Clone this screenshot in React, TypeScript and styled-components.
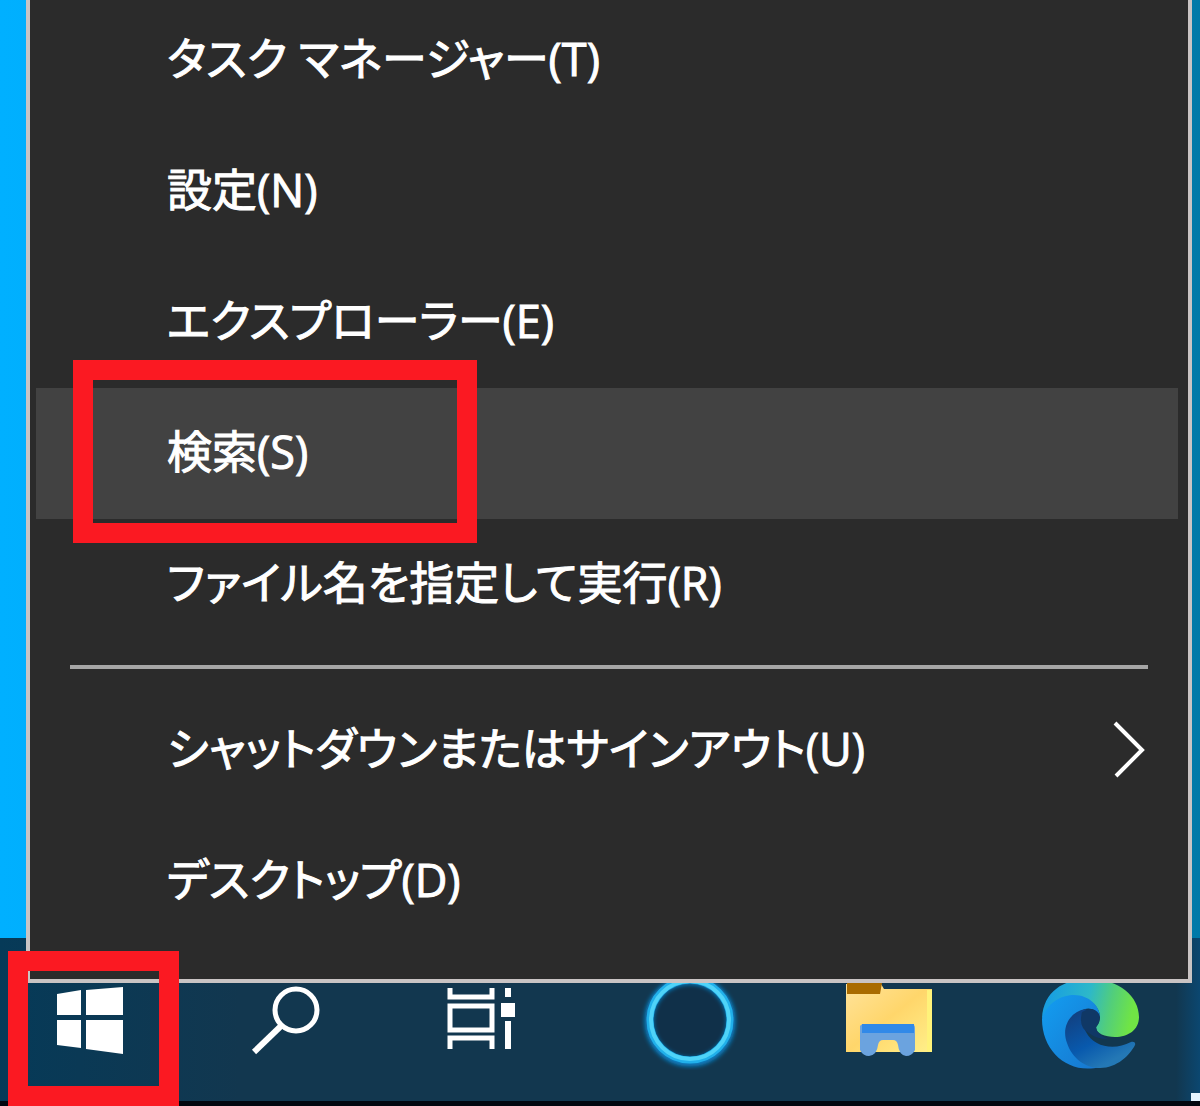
import React from "react";
import styled, { createGlobalStyle, css } from "styled-components";

const GlobalStyle = createGlobalStyle`
  *, *::before, *::after { box-sizing: border-box; }
  body {
    margin: 0;
    background: #0b2d45;
    font-family: "Open Sans", "Noto Sans CJK JP", sans-serif;
  }
`;

const Desktop = styled.main`
  display: flex;
  flex-direction: column;
  justify-content: flex-end;
  height: 100vh;
  overflow: hidden;
  background: linear-gradient(90deg, #00b0ff 0%, #00a2ea 50%, #0079a8 100%);
`;

const Menu = styled.ul`
  position: relative;
  z-index: 1;
  flex: none;
  margin: 0 8px 0 26px;
  padding: 0 10px 32px 6px;
  list-style: none;
  background: #2b2b2b;
  border: 4px solid #c9c4c4;
  border-top-width: 0;
`;

const MenuItem = styled.li`
  position: relative;
`;

const MenuButton = styled.button<{ $active?: boolean }>`
  display: flex;
  align-items: center;
  justify-content: space-between;
  width: 100%;
  height: 131px;
  padding: 0 32px 4px 131px;
  border: 0;
  background: ${(p) => (p.$active ? "#424242" : "transparent")};
  color: #fff;
  font: inherit;
  font-size: 45px;
  line-height: 64px;
  font-feature-settings: "palt";
  -webkit-text-stroke: 1px #fff;
  text-align: left;
  white-space: nowrap;
`;

const Separator = styled.li`
  height: 4px;
  margin: 15px 30px 16px 34px;
  background: #a6a6a6;
`;

const highlight = css`
  content: "";
  position: absolute;
  z-index: 2;
  border: 20px solid #fb1922;
  pointer-events: none;
`;

const SearchHighlight = styled.span`
  ${highlight}
  top: -28px;
  bottom: -24px;
  left: 37px;
  width: 404px;
`;

const StartHighlight = styled.span`
  ${highlight}
  top: -19px;
  left: -33px;
  width: 171px;
  height: 155px;
`;

const Taskbar = styled.nav`
  position: relative;
  display: flex;
  flex: none;
  align-items: flex-start;
  justify-content: space-between;
  height: 168px;
  margin-top: -45px;
  padding: 32px 61px 0 41px;
  background: linear-gradient(90deg, #063a58 0, #12374f 20%, #12374f 98%, #0b4770 100%);
  border-bottom: 5px solid #02060f;

  &::after {
    content: "";
    position: absolute;
    right: 0;
    bottom: 0;
    width: 9px;
    height: 8px;
    background: #e4f4ff;
  }
`;

const TaskButton = styled.button`
  position: relative;
  width: 100px;
  height: 100px;
  padding: 0;
  border: 0;
  background: transparent;

  svg {
    display: block;
  }
`;

const Chevron = () => (
  <svg width="36" height="60" viewBox="0 0 36 60" fill="none" stroke="#fff" strokeWidth="4" aria-hidden="true">
    <path d="M5 4 32 31 6 57" />
  </svg>
);

const Icon = ({ children }: { children: React.ReactNode }) => (
  <svg width="100" height="100" viewBox="0 0 100 100" fill="none" aria-hidden="true">
    {children}
  </svg>
);

const StartIcon = () => (
  <Icon>
    <g fill="#fff">
      <path d="M16 24 40 20V45H16z" />
      <path d="M45 20 82 17V45H45z" />
      <path d="M16 50H40V78L16 75z" />
      <path d="M45 50H82V84L45 79z" />
    </g>
  </Icon>
);

const SearchIcon = () => (
  <Icon>
    <g stroke="#fff" strokeWidth="5">
      <circle cx="55" cy="40" r="21" />
      <path d="M40 56 13 82" strokeWidth="6" />
    </g>
  </Icon>
);

const TaskViewIcon = () => (
  <Icon>
    <g stroke="#fff" strokeWidth="5">
      <path d="M10 18V27H52V18" />
      <rect x="10" y="36" width="42" height="24" />
      <path d="M10 79V68H52V79" />
      <path d="M68 18V27M68 51V79" strokeWidth="6" />
    </g>
    <rect x="61" y="33" width="14" height="14" fill="#fff" />
  </Icon>
);

const CortanaIcon = () => (
  <Icon>
    <defs>
      <filter id="glow" x="-20%" y="-20%" width="140%" height="140%">
        <feGaussianBlur stdDeviation="2" />
      </filter>
    </defs>
    <circle cx="50" cy="50" r="40" fill="#103049" />
    <circle cx="50" cy="51" r="41" stroke="#0a80c4" strokeWidth="9" filter="url(#glow)" />
    <circle cx="50" cy="50" r="40" stroke="#21b0ea" strokeWidth="7" />
    <circle cx="50" cy="50" r="39" stroke="#4fd3f8" strokeWidth="4" />
  </Icon>
);

const FolderIcon = () => (
  <Icon>
    <defs>
      <linearGradient id="folder" x1="0" y1="0" x2="1" y2="1">
        <stop stopColor="#ffe39b" />
        <stop offset="0.5" stopColor="#ffd66b" />
        <stop offset="1" stopColor="#fff08a" />
      </linearGradient>
    </defs>
    <path d="M7 14H42L45 19H93V82H7z" fill="url(#folder)" />
    <path d="M8 13H43L41 24H8z" fill="#a96b00" />
    <path d="M88 20H93V82H88z" fill="#fff27a" />
    <path d="M21 56Q22 54 26 54H72Q76 54 76 58V80Q73 86 67 86 60 85 59 75 58 70 54 70H44Q40 70 39 75 38 85 30 86 24 86 21 80z" fill="#6ba3df" />
    <path d="M23 54H75V63H23z" fill="#3189e8" />
  </Icon>
);

const EdgeIcon = () => (
  <Icon>
    <defs>
      <linearGradient id="edgeWave" x1="4" y1="20" x2="94" y2="40" gradientUnits="userSpaceOnUse">
        <stop stopColor="#159be4" />
        <stop offset="0.5" stopColor="#2db8c9" />
        <stop offset="0.75" stopColor="#52ce7b" />
        <stop offset="1" stopColor="#70e445" />
      </linearGradient>
      <linearGradient id="edgeBody" x1="5" y1="40" x2="70" y2="92" gradientUnits="userSpaceOnUse">
        <stop stopColor="#1399ed" />
        <stop offset="1" stopColor="#1874cc" />
      </linearGradient>
      <linearGradient id="edgeInner" x1="35" y1="40" x2="65" y2="95" gradientUnits="userSpaceOnUse">
        <stop stopColor="#123f7e" />
        <stop offset="0.6" stopColor="#0859ad" />
        <stop offset="1" stopColor="#2478b5" />
      </linearGradient>
    </defs>
    <path d="M3 49C4 22 24 9 50 9 81 9 100 27 100 47 100 60 89 67 76 67 66 67 57 63 57 58 57 56 61 54 61 47 61 37 51 28 38 28 21 28 9 37 3 49z" fill="url(#edgeWave)" />
    <path d="M3 49C7 35 20 25 35 25 50 25 61 36 61 47 59 41 52 37 46 39 34 43 28 57 32 70 36 84 47 94 61 97 30 105 3 82 3 49z" fill="url(#edgeBody)" />
    <path d="M46 39C31 42 22 57 28 73 33 88 46 98 61 98 78 98 91 85 96 75 97 72 94 71 92 72 75 81 55 77 47 62 43 54 45 46 50 41z" fill="url(#edgeInner)" />
    <path d="M43 42Q54 35 60 44 62 51 57 57 58 65 69 69 57 69 50 63 39 58 43 42z" fill="#103866" />
  </Icon>
);

type Entry = { label: string; active?: boolean; submenu?: boolean };

const tools: Entry[] = [
  { label: "タスク マネージャー(T)" },
  { label: "設定(N)" },
  { label: "エクスプローラー(E)" },
  { label: "検索(S)", active: true },
  { label: "ファイル名を指定して実行(R)" },
];

const session: Entry[] = [
  { label: "シャットダウンまたはサインアウト(U)", submenu: true },
  { label: "デスクトップ(D)" },
];

const apps = [
  { name: "スタート", icon: <StartIcon />, marked: true },
  { name: "検索", icon: <SearchIcon /> },
  { name: "タスク ビュー", icon: <TaskViewIcon /> },
  { name: "Cortana", icon: <CortanaIcon /> },
  { name: "エクスプローラー", icon: <FolderIcon /> },
  { name: "Microsoft Edge", icon: <EdgeIcon /> },
];

const Row = ({ label, active, submenu }: Entry) => (
  <MenuItem>
    <MenuButton type="button" $active={active} aria-haspopup={submenu ? "menu" : undefined}>
      {label}
      {submenu && <Chevron />}
    </MenuButton>
    {active && <SearchHighlight />}
  </MenuItem>
);

export default function App() {
  return (
    <>
      <GlobalStyle />
      <Desktop lang="ja">
        <Menu>
          {tools.map((entry) => (
            <Row key={entry.label} {...entry} />
          ))}
          <Separator role="separator" />
          {session.map((entry) => (
            <Row key={entry.label} {...entry} />
          ))}
        </Menu>
        <Taskbar>
          {apps.map((app) => (
            <TaskButton key={app.name} type="button" aria-label={app.name}>
              {app.icon}
              {app.marked && <StartHighlight />}
            </TaskButton>
          ))}
        </Taskbar>
      </Desktop>
    </>
  );
}
